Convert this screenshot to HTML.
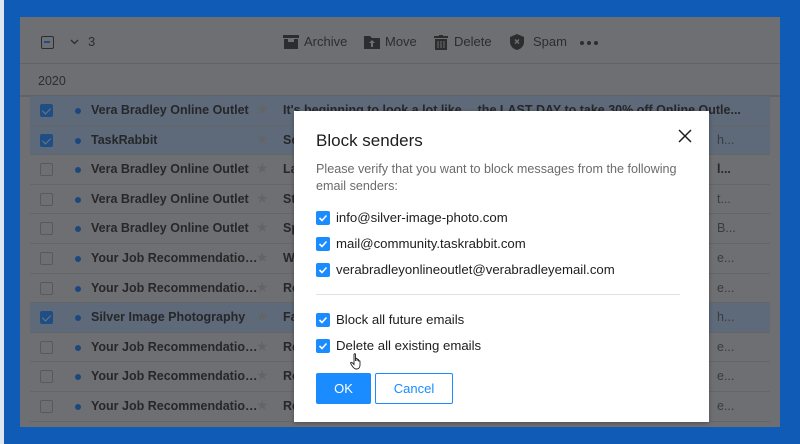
<!DOCTYPE html>
<html><head><meta charset="utf-8"><style>
*{margin:0;padding:0;box-sizing:border-box}
html,body{background:#0f5bb5}
body{width:800px;height:444px;overflow:hidden;font-family:"Liberation Sans",Arial,sans-serif;position:relative}
#edge{position:absolute;left:0;top:0;width:4px;height:444px;background:#dfe6ef}
#panel{position:absolute;left:20px;top:17px;width:760px;height:410px;background:#c9cbcf;overflow:hidden}
#ov{position:absolute;left:20px;top:17px;width:760px;height:410px;background:rgba(0,0,0,0.45)}
#tb{position:absolute;left:0;top:0;width:760px;height:47px;border-bottom:1px solid #b3b5b9;color:#505256;font-size:13px}
.ti{position:absolute;top:17px;height:16px;display:flex;align-items:center;line-height:16px}
#yr{position:absolute;left:18px;top:57px;font-size:12.5px;color:#505256}
#hline{position:absolute;left:0;top:78px;width:760px;height:2px;background:#b3b5b9}
.row{position:absolute;left:10px;width:740px;height:29.6px;border-bottom:1px solid #b6b8bc}
.row.sel{background:#acc1de}
.cb{position:absolute;left:10px;top:8px;width:13px;height:13px;border:1px solid #a2a3a6;border-radius:2px}
.sel .cb{background:#3a8ef0;border-color:#3a8ef0}
.sel .cb:after{content:"";position:absolute;left:3px;top:1px;width:4px;height:7px;border:solid #c9d9ee;border-width:0 1.5px 1.5px 0;transform:rotate(45deg)}
.dot{position:absolute;left:45px;top:12px;width:6px;height:6px;border-radius:50%;background:#3282e6}
.nm{position:absolute;left:61px;top:7px;font-size:12.5px;font-weight:bold;color:#45474b;white-space:nowrap}
.st{position:absolute;left:226px;top:5px;color:#b4b6ba;font-size:14px}
.sb{position:absolute;left:253px;top:7px;font-size:12.5px;font-weight:bold;color:#45474b;white-space:nowrap}
.en{position:absolute;left:687px;top:7px;font-size:12.5px;color:#6a6c70}
#modal{position:absolute;left:294px;top:111px;width:415px;height:311px;background:#fff;box-shadow:0 1px 4px rgba(0,0,0,.3)}
#modal h1{position:absolute;left:22px;top:20px;font-size:17px;font-weight:normal;color:#1d1d1f}
#x{position:absolute;left:384px;top:18px}
#p{position:absolute;left:22px;top:50px;width:380px;font-size:12.6px;line-height:16.5px;color:#6b6b6d}
.ck{position:absolute;left:22px;width:14px;height:14px;background:#1a8cff;border-radius:2px}
.ck svg{position:absolute;left:2px;top:2px}
.lb{position:absolute;left:42px;font-size:13.2px;color:#1d1d1f;white-space:nowrap}
#div{position:absolute;left:22px;top:183px;width:364px;height:1px;background:#e2e2e4}
#ok{position:absolute;left:22px;top:262px;width:55px;height:31px;background:#1a8cff;color:#fff;font-size:13px;text-align:center;line-height:31px;border-radius:2px}
#cn{position:absolute;left:81px;top:262px;width:78px;height:31px;border:1px solid #1a8cff;color:#1a8cff;font-size:13px;text-align:center;line-height:29px;border-radius:2px}
.dots{position:absolute;top:24px;width:4px;height:4px;border-radius:50%;background:#505256}
</style></head><body>
<div id="edge"></div>
<div id="panel">
<div id="tb">
 <div class="ti" style="left:21px"><div style="width:13px;height:13px;border:1.5px solid #505256;border-radius:2px;position:relative"><div style="position:absolute;left:2px;top:4.5px;width:6px;height:1.5px;background:#3a8ef0"></div></div></div>
 <div class="ti" style="left:50px"><svg width="9" height="6" viewBox="0 0 9 6"><path d="M1 1l3.5 3.5L8 1" stroke="#505256" fill="none" stroke-width="1.3"/></svg><span style="margin-left:9px">3</span></div>
 <div class="ti" style="left:263px"><svg width="16" height="14" viewBox="0 0 16 14"><rect x="0" y="0" width="16" height="3" fill="#505256"/><path d="M1 4h4v3h6V4h4v10H1z" fill="#505256"/></svg><span style="margin-left:5px">Archive</span></div>
 <div class="ti" style="left:344px"><svg width="16" height="14" viewBox="0 0 16 14"><path d="M0 1h6l2 2h8v11H0z" fill="#505256"/><path d="M8 5l-3 3h2v4h2V8h2z" fill="#c9cbcf"/></svg><span style="margin-left:5px">Move</span></div>
 <div class="ti" style="left:414px"><svg width="14" height="15" viewBox="0 0 14 15"><rect x="0" y="1" width="14" height="2" fill="#505256"/><rect x="5" y="0" width="4" height="2" fill="#505256"/><path d="M1 4h12v11H1z" fill="#505256"/><path d="M4 6v7M7 6v7M10 6v7" stroke="#c9cbcf"/></svg><span style="margin-left:6px">Delete</span></div>
 <div class="ti" style="left:490px"><svg width="14" height="16" viewBox="0 0 14 16"><path d="M7 0l7 3v5c0 4-3 7-7 8-4-1-7-4-7-8V3z" fill="#505256"/><path d="M5 5.5l4 4M9 5.5l-4 4" stroke="#c9cbcf" stroke-width="1.5"/></svg><span style="margin-left:9px">Spam</span></div>
 <div class="dots" style="left:560px"></div><div class="dots" style="left:567px"></div><div class="dots" style="left:574px"></div>
</div>
<div id="yr">2020</div>
<div id="hline"></div>
<div class="row sel" style="top:79px"><div class="cb"></div><div class="dot"></div><div class="nm">Vera Bradley Online Outlet</div><div class="st">★</div><div class="sb">It's beginning to look a lot like… the LAST DAY to take 30% off Online Outle...</div></div>
<div class="row sel" style="top:108.6px"><div class="cb"></div><div class="dot"></div><div class="nm">TaskRabbit</div><div class="st">★</div><div class="sb">So</div><div class="en">h...</div></div>
<div class="row" style="top:138.2px"><div class="cb"></div><div class="dot"></div><div class="nm">Vera Bradley Online Outlet</div><div class="st">★</div><div class="sb">La</div><div class="en" style="font-weight:bold;color:#45474b">l...</div></div>
<div class="row" style="top:167.8px"><div class="cb"></div><div class="dot"></div><div class="nm">Vera Bradley Online Outlet</div><div class="st">★</div><div class="sb">St</div><div class="en">t...</div></div>
<div class="row" style="top:197.4px"><div class="cb"></div><div class="dot"></div><div class="nm">Vera Bradley Online Outlet</div><div class="st">★</div><div class="sb">Sp</div><div class="en">B...</div></div>
<div class="row" style="top:227px"><div class="cb"></div><div class="dot"></div><div class="nm">Your Job Recommendatio…</div><div class="st">★</div><div class="sb">W</div><div class="en">e...</div></div>
<div class="row" style="top:256.6px"><div class="cb"></div><div class="dot"></div><div class="nm">Your Job Recommendatio…</div><div class="st">★</div><div class="sb">Re</div><div class="en">e...</div></div>
<div class="row sel" style="top:286.2px"><div class="cb"></div><div class="dot"></div><div class="nm">Silver Image Photography</div><div class="st">★</div><div class="sb">Fa</div><div class="en">h...</div></div>
<div class="row" style="top:315.8px"><div class="cb"></div><div class="dot"></div><div class="nm">Your Job Recommendatio…</div><div class="st">★</div><div class="sb">Re</div><div class="en">e...</div></div>
<div class="row" style="top:345.4px"><div class="cb"></div><div class="dot"></div><div class="nm">Your Job Recommendatio…</div><div class="st">★</div><div class="sb">Re</div><div class="en">e...</div></div>
<div class="row" style="top:375px"><div class="cb"></div><div class="dot"></div><div class="nm">Your Job Recommendatio…</div><div class="st">★</div><div class="sb">Re</div><div class="en">e...</div></div>
<div class="row" style="top:404.6px"><div class="cb"></div><div class="dot" style="background:#2a40d0"></div></div>
</div>
<div id="ov"></div>
<div id="modal">
<h1>Block senders</h1>
<svg id="x" width="14" height="14" viewBox="0 0 14 14"><path d="M1 1l12 12M13 1L1 13" stroke="#1d1d1f" stroke-width="1.5"/></svg>
<div id="p">Please verify that you want to block messages from the following email senders:</div>
<div class="ck" style="top:100px"><svg width="10" height="10" viewBox="0 0 10 10"><path d="M1.5 5l2.5 2.5 4.5-5" stroke="#fff" stroke-width="1.6" fill="none"/></svg></div><div class="lb" style="top:99px">info@silver-image-photo.com</div>
<div class="ck" style="top:126px"><svg width="10" height="10" viewBox="0 0 10 10"><path d="M1.5 5l2.5 2.5 4.5-5" stroke="#fff" stroke-width="1.6" fill="none"/></svg></div><div class="lb" style="top:125px">mail@community.taskrabbit.com</div>
<div class="ck" style="top:152px"><svg width="10" height="10" viewBox="0 0 10 10"><path d="M1.5 5l2.5 2.5 4.5-5" stroke="#fff" stroke-width="1.6" fill="none"/></svg></div><div class="lb" style="top:151px">verabradleyonlineoutlet@verabradleyemail.com</div>
<div id="div"></div>
<div class="ck" style="top:202px"><svg width="10" height="10" viewBox="0 0 10 10"><path d="M1.5 5l2.5 2.5 4.5-5" stroke="#fff" stroke-width="1.6" fill="none"/></svg></div><div class="lb" style="top:201px">Block all future emails</div>
<div class="ck" style="top:228px"><svg width="10" height="10" viewBox="0 0 10 10"><path d="M1.5 5l2.5 2.5 4.5-5" stroke="#fff" stroke-width="1.6" fill="none"/></svg></div><div class="lb" style="top:227px">Delete all existing emails</div>
<svg style="position:absolute;left:56px;top:242px" width="14" height="17" viewBox="0 0 14 17"><path d="M4 1.5c0-1 1.5-1 1.5 0V8l0-2c0-1 1.5-1 1.5 0v2-1c0-1 1.5-1 1.5 0v1.5c0-1 1.5-1 1.5 0V12c0 2-1 4-3.5 4H6c-2 0-3-2-4.5-4L.8 10.5c-.5-1 .7-1.6 1.4-.8L4 11.5z" fill="#fff" stroke="#1d1d1f" stroke-width="0.9"/></svg>
<div id="ok">OK</div>
<div id="cn">Cancel</div>
</div>
</body></html>
